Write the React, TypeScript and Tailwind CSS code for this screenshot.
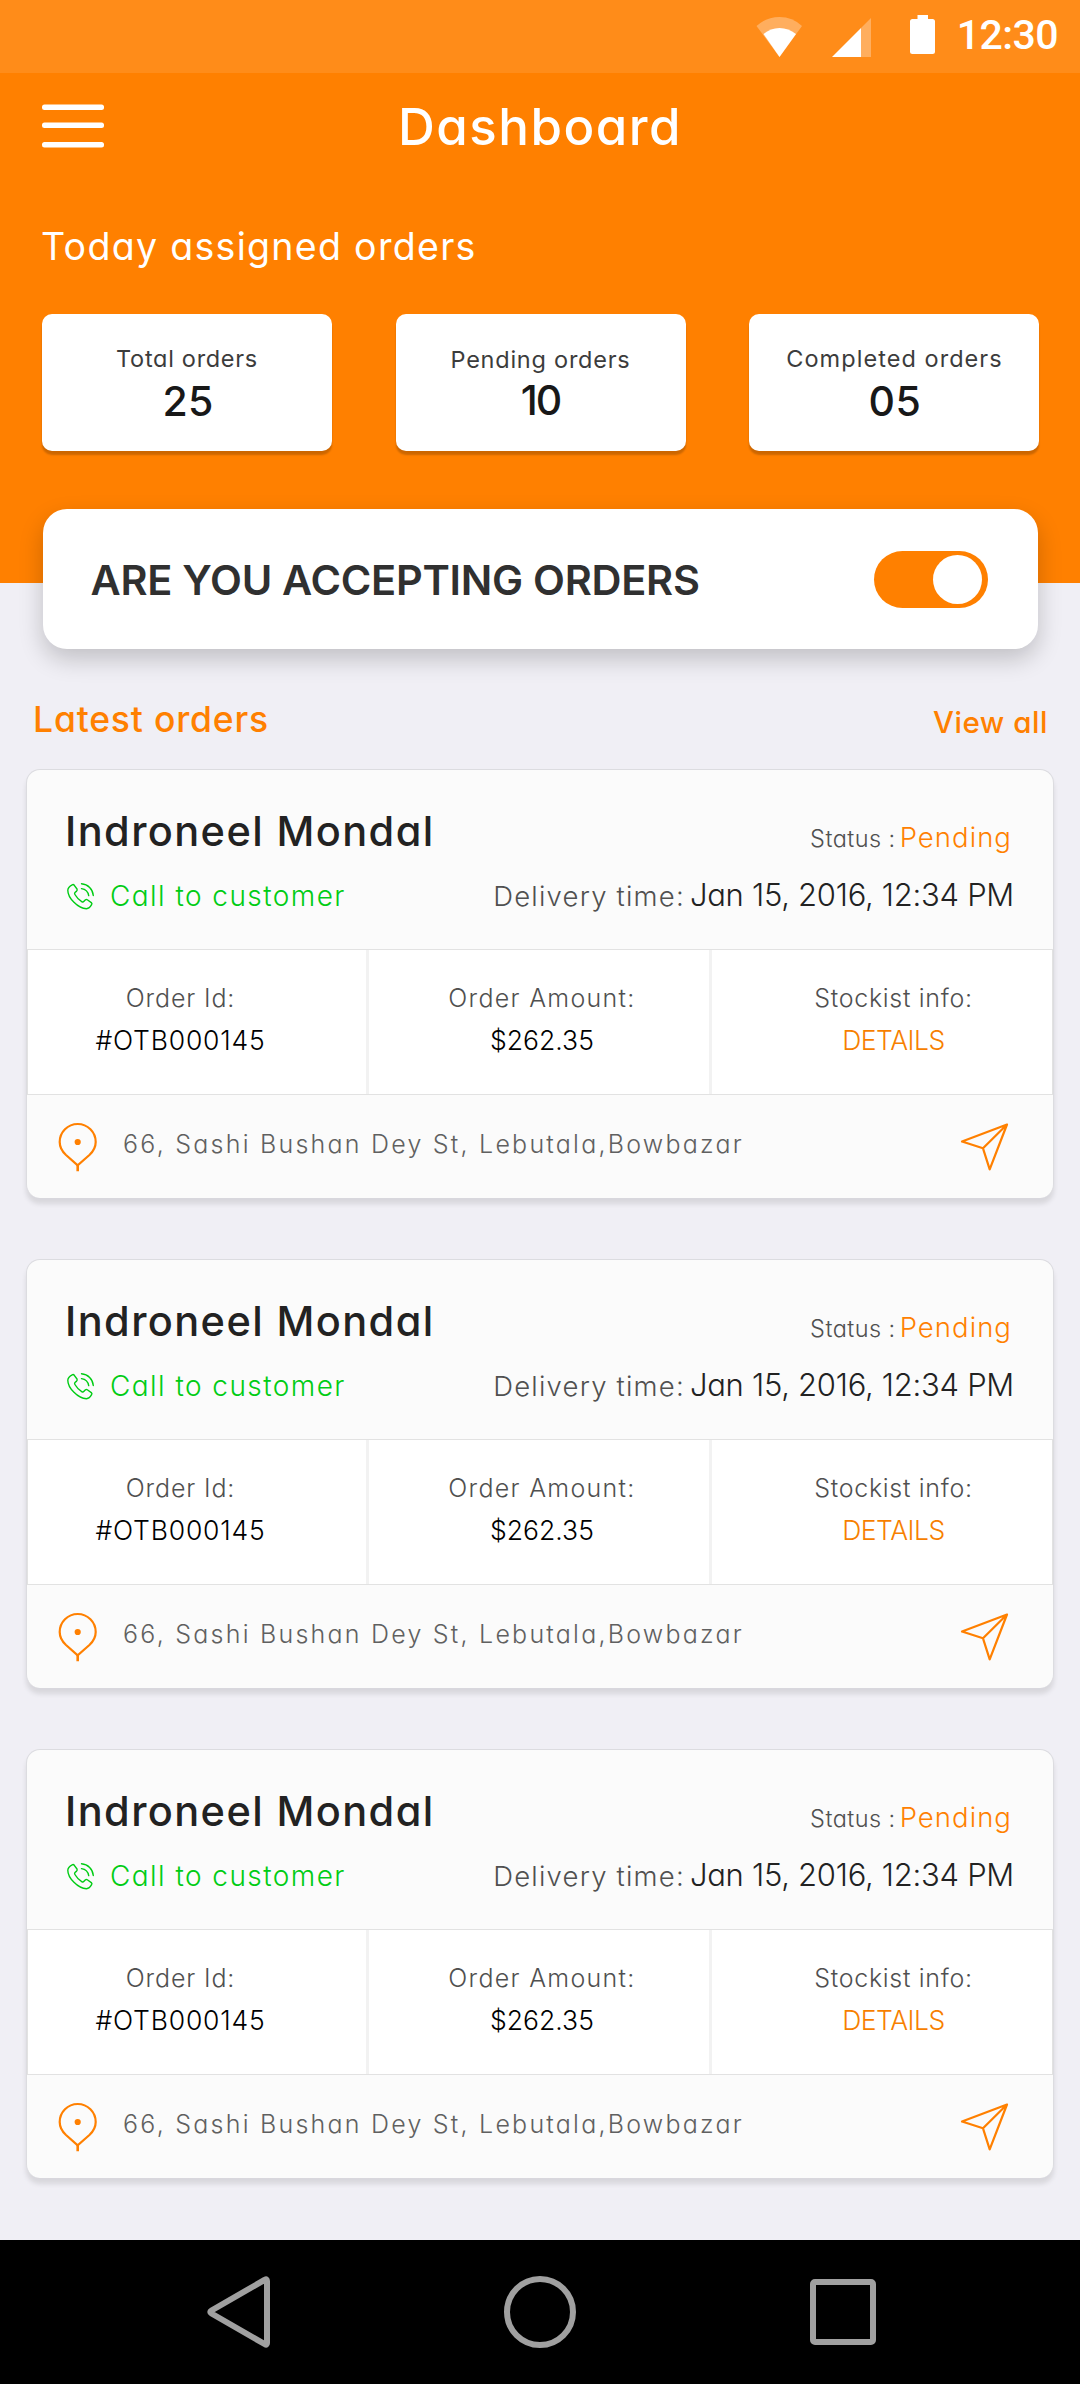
const stats = [
  { label: 'Total orders', value: '25', labelClass: 'mt-[25px] tracking-[0.7px]', valueClass: 'tracking-[0.24px] -mr-[2px]' },
  { label: 'Pending orders', value: '10', labelClass: 'mt-[26px] tracking-[0.76px]', valueClass: '-mt-[2px] tracking-[-2px]' },
  { label: 'Completed orders', value: '05', labelClass: 'mt-[25px] tracking-[1.05px] -mr-[1px]', valueClass: 'tracking-[0.53px] -mr-[2px]' },
];

const order = {
  name: 'Indroneel Mondal',
  status: 'Pending',
  time: 'Jan 15, 2016, 12:34 PM',
  id: '#OTB000145',
  amount: '$262.35',
  address: '66, Sashi Bushan Dey St, Lebutala,Bowbazar',
};
const orders = [order, order, order];

function StatusBar() {
  return (
    <div className="flex h-[73px] items-start justify-end bg-[#ff8c19] pr-[22px] text-white">
      <svg className="mr-[29px]" width="47" height="73" viewBox="755 0 47 73" fill="currentColor">
        <path opacity=".3" d="M778.5 57 L755.5 26 Q765.5 17 778.5 17 Q791.5 17 801 26Z" />
        <path d="M778.5 57 L762.5 34 Q769.5 28 778.5 28 Q787.5 28 795 34Z" />
      </svg>
      <svg className="mr-[39px]" width="39" height="73" viewBox="831 0 39 73" fill="currentColor">
        <path opacity=".3" d="M860 28 L870 18 V57 H860Z" />
        <path d="M831 57 L860 28 V57Z" />
      </svg>
      <svg className="mr-[22px]" width="25" height="73" viewBox="910 0 25 73" fill="currentColor">
        <path d="M917.5 15 H928 V19 H932.5 Q935 19 935 21.5 V51.5 Q935 54 932.5 54 H912.5 Q910 54 910 51.5 V21.5 Q910 19 912.5 19 H917.5Z" />
      </svg>
      <span className="mt-[15px] font-[Roboto] text-[41px] leading-[41px] font-medium tracking-[-0.55px]">12:30</span>
    </div>
  );
}

function PhoneIcon() {
  return (
    <svg width="27" height="27" viewBox="0 0 27 27" fill="none" stroke="#00cc14" strokeWidth="1.4" strokeLinecap="round" strokeLinejoin="round">
      <path d="M5.2 1.8C6 1.4 6.8 1.7 7.3 2.3L10 6c.4.8.2 1.5-.4 2.1L8 9.5c-.6.6-.5 1.3-.1 2 1.6 2.8 4.1 5.5 7.1 7.3.7.4 1.4.2 2-.5l1.2-1.3c.7-.6 1.4-.7 2.1-.2l4 2.8c.7.6.8 1.4.3 2.1-1 1.9-2.6 3.9-5.1 4C11 25.5.8 15 .8 7.2.9 4.8 3 3 5.2 1.8Z" />
      <path d="M14.5.8C21 1.3 25.8 6 26.3 12.5M14.5 5.6c4 .6 6.6 3 7.2 7" />
    </svg>
  );
}

function PinIcon() {
  return (
    <svg width="40" height="50" viewBox="0 0 40 50" fill="none" stroke="#ff8000" strokeWidth="2.2">
      <path d="M19.7 43.3 8 33C4 29.3 1.7 25 1.7 20a18 18 0 0 1 36 0c0 5-2.3 9.3-6.3 13Z" />
      <path strokeWidth="2.6" d="M19.7 43v6.3" />
      <circle cx="19.7" cy="20" r="3.1" fill="#ff8000" stroke="none" />
    </svg>
  );
}

function SendIcon() {
  return (
    <svg width="49" height="50" viewBox="0 0 49 50" fill="none" stroke="#ff8000" strokeWidth="2.2" strokeLinejoin="round" strokeLinecap="round">
      <path d="M47 2.5 2 19.5 23 26.3 29.7 47.3ZM23 26.3 47 2.5" />
    </svg>
  );
}

function OrderCard({ o }: { o: typeof order }) {
  return (
    <article className="h-[429px] overflow-hidden rounded-[14px] border border-b-0 border-[#dcdce0] bg-[#fbfbfb] shadow-[0_6px_5px_rgba(0,0,0,0.1)]">
      <div className="h-[179px] pt-[36px] pr-[40px] pl-[37px]">
        <div className="flex h-[50px] items-start justify-between">
          <h3 className="ml-[1px] text-[41.5px] leading-[50px] font-medium tracking-[1.4px] text-[#222]">{o.name}</h3>
          <div className="mt-[6px] flex items-baseline gap-[4px] pr-[1px] text-[27.5px] leading-[50px]">
            <span className="text-[23.5px] tracking-[0.44px] text-[#505050]">Status :</span>
            <span className="tracking-[1.05px] text-[#ff8000]">{o.status}</span>
          </div>
        </div>
        <div className="mt-[18px] flex items-start justify-between">
          <div className="mt-[2px] flex items-center gap-[16px] pl-[3px]">
            <PhoneIcon />
            <span className="text-[28px] leading-[40px] tracking-[1.44px] text-[#00cc14]">Call to customer</span>
          </div>
          <div className="-mr-[1px] flex items-baseline gap-[5px] pt-[1px]">
            <span className="text-[27.5px] leading-[40px] tracking-[1.2px] text-[#505050]">Delivery time:</span>
            <span className="text-[31px] leading-[40px] tracking-[-0.28px] text-[#222]">{o.time}</span>
          </div>
        </div>
      </div>
      <div className="flex h-[146px] border border-[#e2e2e2] bg-white text-center leading-[42px]">
        <div className="w-[341px] border-r-3 border-[#f2f2f2] pt-[27px] pr-[33px]">
          <div className="text-[25px] tracking-[0.85px] text-[#505050]">Order Id:</div>
          <div className="text-[26.5px] tracking-[0.8px] text-black">{o.id}</div>
        </div>
        <div className="w-[343px] border-r-3 border-[#f2f2f2] pt-[27px] pl-[6px]">
          <div className="text-[25px] tracking-[1.3px] text-[#505050]">Order Amount:</div>
          <div className="text-[26.5px] text-black">{o.amount}</div>
        </div>
        <div className="flex-1 pt-[27px] pl-[23px]">
          <div className="text-[25px] tracking-[0.7px] text-[#505050]">Stockist info:</div>
          <div className="text-[26.5px] tracking-[-0.5px] text-[#f77f00]">DETAILS</div>
        </div>
      </div>
      <div className="flex h-[103px] items-center pt-[1px] pr-[44px] pl-[31px]">
        <PinIcon />
        <span className="mb-[6px] ml-[25px] flex-1 text-[25px] leading-[30px] tracking-[2.23px] text-[#606060]">{o.address}</span>
        <SendIcon />
      </div>
    </article>
  );
}

export default function App() {
  return (
    <div className="flex h-[2384px] w-[1080px] flex-col bg-[#f0eff5] font-[Inter,sans-serif] font-light whitespace-nowrap [font-feature-settings:'cv11']">
      <header className="h-[583px] bg-[#ff8000] text-white">
        <StatusBar />
        <div className="flex h-[107px] items-center pb-[1px] pl-[42px]">
          <svg width="62" height="44" viewBox="0 0 62 44" fill="currentColor">
            <rect y="0.5" width="62" height="5.5" rx="2.5" />
            <rect y="18.5" width="62" height="5.5" rx="2.5" />
            <rect y="38" width="62" height="5.5" rx="2.5" />
          </svg>
          <h1 className="ml-[294px] pt-[1px] text-[51px] leading-[60px] font-medium tracking-[1.5px]">Dashboard</h1>
        </div>
        <h2 className="pl-[41px] text-[37.5px] leading-[134px] font-normal tracking-[1.31px]">Today assigned orders</h2>
        <div className="flex justify-between pr-[41px] pl-[42px]">
          {stats.map((s) => (
            <div key={s.label} className="flex h-[137px] w-[290px] flex-col items-center rounded-[10px] bg-white shadow-[0_4px_2px_rgba(0,0,0,0.2)]">
              <div className={`text-[23.5px] leading-[40px] font-normal text-[#3c3c3c] ${s.labelClass}`}>{s.label}</div>
              <div className={`text-[41px] leading-[44px] font-medium text-[#181818] ${s.valueClass}`}>{s.value}</div>
            </div>
          ))}
        </div>
      </header>

      <section className="relative mr-[42px] -mt-[74px] ml-[42.5px] flex h-[140px] items-center justify-between rounded-[24px] bg-white pr-[50px] pl-[48px] shadow-[0_10px_25px_rgba(0,0,0,0.2)]">
        <span className="pt-[2px] text-[41.5px] leading-[50px] font-semibold tracking-[-0.26px] text-[#303030]">ARE YOU ACCEPTING ORDERS</span>
        <div className="mt-[1px] flex h-[57px] w-[114px] items-center justify-end rounded-full bg-[#ff8000] pr-[6px]">
          <div className="size-[49px] rounded-full bg-white" />
        </div>
      </section>

      <div className="flex h-[120px] items-start justify-between pt-[50px] pr-[32px] pl-[33px] font-medium text-[#ff8000]">
        <h2 className="text-[35.5px] leading-[41px] tracking-[0.81px]">Latest orders</h2>
        <a className="mt-[3px] text-[29.5px] leading-[41px] tracking-[0.55px]">View all</a>
      </div>

      <main className="flex flex-1 flex-col gap-[61px] px-[26px]">
        {orders.map((o, i) => (
          <OrderCard key={i} o={o} />
        ))}
      </main>

      <nav className="flex h-[144px] items-center justify-between bg-black pr-[204px] pl-[207px]">
        <svg width="63" height="72" viewBox="0 0 63 72" fill="none" stroke="#a0a0a0" strokeWidth="6" strokeLinejoin="round">
          <path d="M58 3.7Q60 2.5 60 5V67Q60 69.5 58 68.3L4.5 37.5Q2 36 4.5 34.5Z" />
        </svg>
        <svg width="72" height="72" viewBox="0 0 72 72" fill="none" stroke="#a0a0a0" strokeWidth="6">
          <circle cx="36" cy="36" r="33" />
        </svg>
        <svg width="66" height="66" viewBox="0 0 66 66" fill="none" stroke="#a0a0a0" strokeWidth="6">
          <rect x="3" y="3" width="60" height="60" rx="2" />
        </svg>
      </nav>
    </div>
  );
}
